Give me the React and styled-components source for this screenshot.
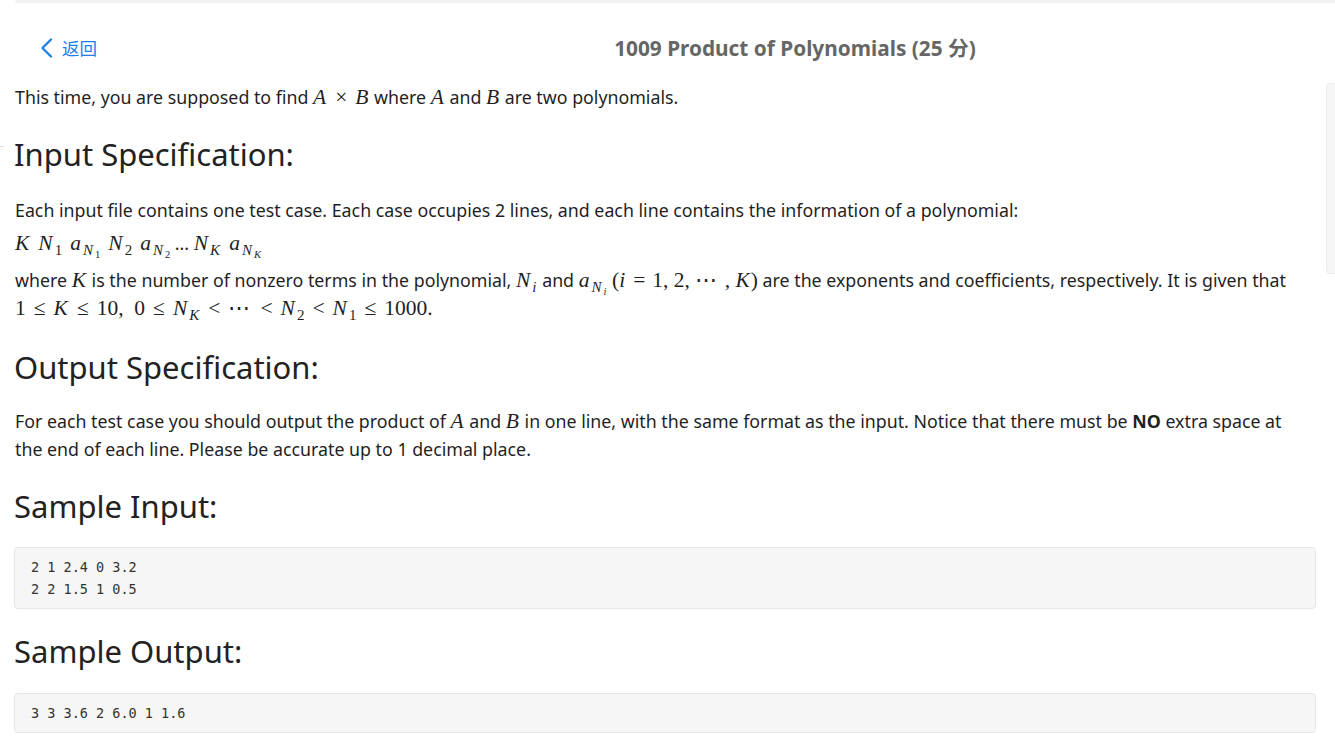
import React from 'react';
import styled, { createGlobalStyle } from 'styled-components';

const GlobalStyle = createGlobalStyle`
  html, body {
    margin: 0;
    padding: 0;
    background: #fff;
  }
  body {
    font-family: "Noto Sans", "Noto Sans CJK SC", sans-serif;
    color: #1f1f1f;
  }
`;

const Page = styled.div`
  position: relative;
  min-height: 740px;
`;

const TopStrip = styled.div`
  height: 3px;
  margin-left: 15px;
  background: #f3f3f3;
  border-bottom-left-radius: 8px;
`;

const Header = styled.header`
  display: grid;
  grid-template-columns: 255px 1fr;
  align-items: center;
  padding: 25px 15px 0 15px;
  height: 40px;
  line-height: 30px;
`;

const BackLink = styled.a`
  display: flex;
  align-items: center;
  gap: 9px;
  padding-left: 25px;
  color: #1a7fe8;
  font-size: 17.5px;
  cursor: pointer;
  font-family: "Noto Sans CJK SC", "Noto Sans", sans-serif;
`;

const Title = styled.h1`
  margin: 0;
  text-align: center;
  font-size: 20.8px;
  font-weight: 700;
  color: #666;
  font-family: "Noto Sans", "Noto Sans CJK SC", sans-serif;
`;

const Content = styled.main`
  padding: 0 19px 0 14px;
`;

const Para = styled.p`
  margin: ${(p) => p.$top || 0}px 16px 0 1px;
  font-size: 17.8px;
  line-height: 28px;
`;

const Heading = styled.h2`
  margin: ${(p) => p.$top}px 0 0 0;
  font-size: 31px;
  font-weight: 400;
  line-height: 40px;
  color: #222;
`;

const Code = styled.pre`
  margin: ${(p) => p.$top}px 0 0 0;
  padding: 8px 16px 8px 16px;
  background: #f6f6f6;
  border: 1px solid #e6e6e6;
  border-radius: 4px;
  font-family: "DejaVu Sans Mono", monospace;
  font-size: 13.5px;
  line-height: 22px;
  color: #333;
`;

const M = styled.span`
  font-family: "Liberation Serif", serif;
  font-size: 21.5px;
  line-height: 0;
  white-space: nowrap;
`;

const V = styled.i`
  font-style: italic;
  padding-right: 1px;
`;

const Sub = styled.sub`
  font-size: 0.7em;
  vertical-align: -0.3em;
  line-height: 0;
  padding-left: 1px;
`;

const Op = styled.span`
  padding: 0 ${(p) => p.$pad || 8}px;
`;

const Dots = styled.span`
  letter-spacing: 2px;
`;

const Gap = styled.span`
  padding-left: ${(p) => p.$w || 8}px;
`;

const Scroll = styled.div`
  position: absolute;
  right: 0;
  top: 83px;
  width: 8px;
  height: 189px;
  background: #f6f6f6;
  border: 1px solid #eeeeee;
  border-right: none;
  border-radius: 4px 0 0 4px;
`;

const Mark = styled.div`
  position: absolute;
  left: 0;
  top: 146px;
  width: 4px;
  height: 1px;
  background: #dcdcdc;
`;

const Chevron = () => (
  <svg width="13" height="20" viewBox="0 0 13 20" fill="none">
    <polyline
      points="11,1.5 2.5,10 11,18.5"
      stroke="currentColor"
      strokeWidth="2.3"
      strokeLinecap="round"
      strokeLinejoin="round"
    />
  </svg>
);

const App = () => {
  return (
    <Page>
      <GlobalStyle />
      <TopStrip />
      <Header>
        <BackLink>
          <Chevron />
          返回
        </BackLink>
        <Title>1009 Product of Polynomials (25 分)</Title>
      </Header>
      <Content>
        <Para $top={15}>
          This time, you are supposed to find{' '}
          <M>
            <V>A</V>
            <Op $pad={8}>×</Op>
            <V>B</V>
          </M>{' '}
          where <M><V>A</V></M> and <M><V>B</V></M> are two polynomials.
        </Para>

        <Heading $top={23}>Input Specification:</Heading>
        <Para $top={22}>
          Each input file contains one test case. Each case occupies 2 lines, and each line contains the information of a polynomial:
        </Para>
        <Para $top={5}>
          <M>
            <V>K</V>
            <Gap />
            <V>N</V><Sub>1</Sub>
            <Gap />
            <V>a</V><Sub><V>N</V><Sub>1</Sub></Sub>
            <Gap />
            <V>N</V><Sub>2</Sub>
            <Gap />
            <V>a</V><Sub><V>N</V><Sub>2</Sub></Sub>
          </M>{' '}
          ...{' '}
          <M>
            <V>N</V><Sub><V>K</V></Sub>
            <Gap />
            <V>a</V><Sub><V>N</V><Sub><V>K</V></Sub></Sub>
          </M>
        </Para>
        <Para $top={9}>
          where <M><V>K</V></M> is the number of nonzero terms in the polynomial,{' '}
          <M><V>N</V><Sub><V>i</V></Sub></M> and{' '}
          <M><V>a</V><Sub><V>N</V><Sub><V>i</V></Sub></Sub></M>{' '}
          <M>
            (<V>i</V><Op $pad={7}>=</Op>1, 2, <Dots>⋯</Dots> , <V>K</V>)
          </M>{' '}
          are the exponents and coefficients, respectively. It is given that{' '}
          <M>
            1<Op>≤</Op><V>K</V><Op>≤</Op>10,&nbsp;&nbsp;0<Op>≤</Op><V>N</V><Sub><V>K</V></Sub>
            <Op>&lt;</Op><Dots>⋯</Dots><Op>&lt;</Op><V>N</V><Sub>2</Sub><Op>&lt;</Op><V>N</V><Sub>1</Sub>
            <Op>≤</Op>1000.
          </M>
        </Para>

        <Heading $top={25}>Output Specification:</Heading>
        <Para $top={20}>
          For each test case you should output the product of <M><V>A</V></M> and <M><V>B</V></M> in one line, with the same format as the input. Notice that there must be <b>NO</b> extra space at the end of each line. Please be accurate up to 1 decimal place.
        </Para>

        <Heading $top={23}>Sample Input:</Heading>
        <Code $top={21}>{`2 1 2.4 0 3.2
2 2 1.5 1 0.5`}</Code>

        <Heading $top={22}>Sample Output:</Heading>
        <Code $top={22}>{`3 3 3.6 2 6.0 1 1.6`}</Code>
      </Content>
      <Scroll />
      <Mark />
    </Page>
  );
};

export default App;
